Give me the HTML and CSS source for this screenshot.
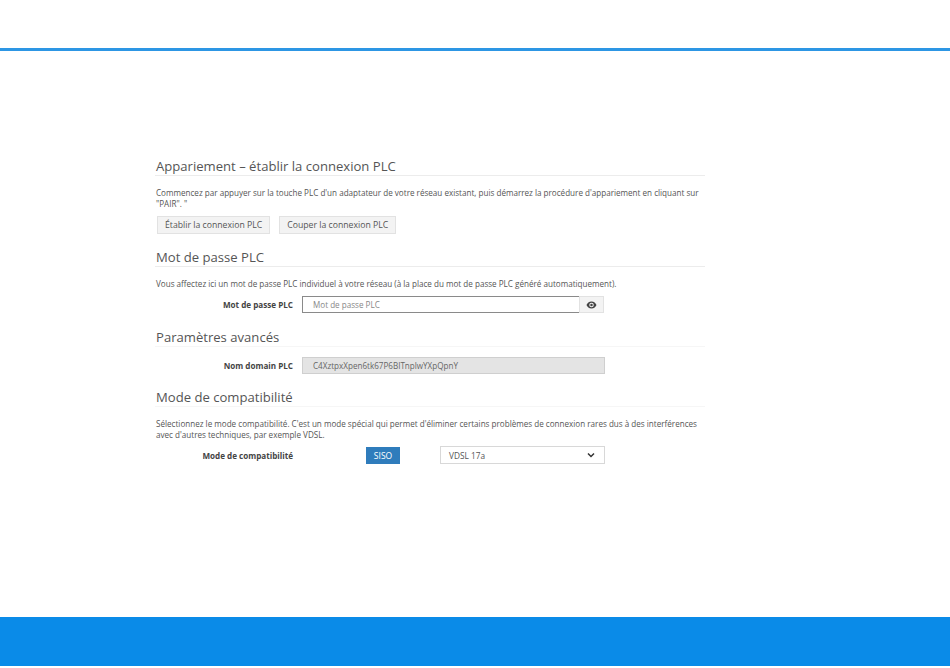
FILE: index.html
```html
<!DOCTYPE html>
<html lang="fr">
<head>
    <meta charset="UTF-8">
    <meta name="viewport" content="width=device-width, initial-scale=1.0">
    <title>Paramètres PLC</title>
    <link rel="stylesheet" href="styles.css">
</head>
<body>
    <div class="page">
        <header class="top-bar"></header>

        <main class="content">
            <!-- Appariement -->
            <section class="section section-pair">
                <h2 class="section-title">Appariement – établir la connexion PLC</h2>
                <p class="section-text">Commencez par appuyer sur la touche PLC d'un adaptateur de votre réseau existant, puis démarrez la procédure d'appariement en cliquant sur "PAIR". "</p>
                <div class="button-row">
                    <button class="btn" type="button">Établir la connexion PLC</button>
                    <button class="btn" type="button">Couper la connexion PLC</button>
                </div>
            </section>

            <!-- Mot de passe -->
            <section class="section section-password">
                <h2 class="section-title">Mot de passe PLC</h2>
                <p class="section-text">Vous affectez ici un mot de passe PLC individuel à votre réseau (à la place du mot de passe PLC généré automatiquement).</p>
                <div class="form-row">
                    <label class="form-label">Mot de passe PLC</label>
                    <div class="input-group">
                        <input class="input input-password" type="text" placeholder="Mot de passe PLC">
                        <button class="btn-eye" type="button" aria-label="Afficher">
                            <svg width="11" height="8" viewBox="0 0 22 16">
                                <path d="M11 1C6 1 2.500 4.500 1 8c1.500 3.500 5 7 10 7s8.500-3.500 10-7c-1.500-3.500-5-7-10-7zm0 11.500a4.500 4.500 0 1 1 0-9 4.500 4.500 0 0 1 0 9z" fill="#444"/>
                                <circle cx="11" cy="8" r="2.500" fill="#444"/>
                            </svg>
                        </button>
                    </div>
                </div>
            </section>

            <!-- Paramètres avancés -->
            <section class="section section-advanced">
                <h2 class="section-title title-faint">Paramètres avancés</h2>
                <div class="form-row">
                    <label class="form-label">Nom domain PLC</label>
                    <input class="input input-readonly" type="text" value="C4XztpxXpen6tk67P6BITnplwYXpQpnY" readonly>
                </div>
            </section>

            <!-- Mode de compatibilité -->
            <section class="section section-mode">
                <h2 class="section-title title-faint">Mode de compatibilité</h2>
                <p class="section-text">Sélectionnez le mode compatibilité. C'est un mode spécial qui permet d'éliminer certains problèmes de connexion rares dus à des interférences avec d'autres techniques, par exemple VDSL.</p>
                <div class="form-row mode-row">
                    <label class="form-label">Mode de compatibilité</label>
                    <span class="badge-siso">SISO</span>
                    <div class="select-box">
                        <span>VDSL 17a</span>
                        <svg width="8" height="6" viewBox="0 0 16 12">
                            <path d="M2 3l6 6 6-6" fill="none" stroke="#333" stroke-width="3"/>
                        </svg>
                    </div>
                </div>
            </section>
        </main>

        <footer class="bottom-bar"></footer>
    </div>
</body>
</html>
```

FILE: styles.css
```css
html, body {
    margin: 0;
    padding: 0;
    height: 100%;
    overflow: hidden;
    background: #fff;
}

body {
    font-family: "Open Sans", Arial, sans-serif;
    font-size: 8.1px;
    color: #555;
}

.page {
    height: 668px;
    display: flex;
    flex-direction: column;
}

.top-bar {
    height: 48px;
    border-bottom: 3px solid #2d96e4;
    flex: none;
}

.content {
    flex: 1;
    width: 550px;
    margin-left: 155px;
    padding-top: 107px;
}

.section-title {
    margin: 0;
    padding: 0 0 1px 1px;
    font-size: 13.1px;
    line-height: 16px;
    font-weight: 400;
    color: #555;
    border-bottom: 1px solid #ececec;
}

.title-faint {
    border-bottom-color: #f6f6f6;
}

.section-text {
    margin: 0;
    padding: 11px 1px 0;
    line-height: 11px;
}

.button-row {
    display: flex;
    gap: 9px;
    padding: 7px 0 0 2px;
}

.btn {
    height: 18px;
    padding: 0 7px;
    font-family: inherit;
    font-size: 8.7px;
    color: #555;
    background: #f3f3f3;
    border: 1px solid #e2e2e2;
}

.section-password {
    margin-top: 15px;
}

.section-advanced {
    margin-top: 16px;
}

.section-mode {
    margin-top: 15px;
}

.form-row {
    display: flex;
    align-items: center;
    margin-top: 7px;
}

.form-label {
    width: 138px;
    flex: none;
    text-align: right;
    font-weight: 700;
    color: #444;
}

.input-group {
    display: flex;
    margin-left: 9px;
}

.input {
    box-sizing: border-box;
    height: 17px;
    padding: 0 10px;
    font-family: inherit;
    font-size: 8.1px;
    color: #666;
    outline: none;
    border-radius: 0;
}

.input::placeholder {
    color: #888;
    opacity: 1;
}

.input-password {
    width: 277px;
    border: 1px solid #8a8a8a;
    border-right: none;
}

.btn-eye {
    width: 25px;
    height: 17px;
    padding: 0;
    display: flex;
    align-items: center;
    justify-content: center;
    background: #f3f3f3;
    border: 1px solid #e2e2e2;
}

.input-readonly {
    width: 303px;
    margin-left: 9px;
    background: #e4e4e4;
    border: 1px solid #cfcfcf;
}

.section-advanced .form-row {
    margin-top: 10px;
}

.mode-row {
    margin-top: 6px;
}

.badge-siso {
    width: 34px;
    height: 17px;
    margin-left: 73px;
    line-height: 17px;
    text-align: center;
    font-size: 8.5px;
    color: #fff;
    background: #2f7cbc;
}

.select-box {
    box-sizing: border-box;
    width: 165px;
    height: 18px;
    margin-left: 40px;
    padding: 0 9px 0 8px;
    display: flex;
    align-items: center;
    justify-content: space-between;
    color: #555;
    font-size: 8.3px;
    border: 1px solid #d8d8d8;
}

.bottom-bar {
    height: 49px;
    margin-bottom: 2px;
    flex: none;
    background: #0a8be8;
}
```
